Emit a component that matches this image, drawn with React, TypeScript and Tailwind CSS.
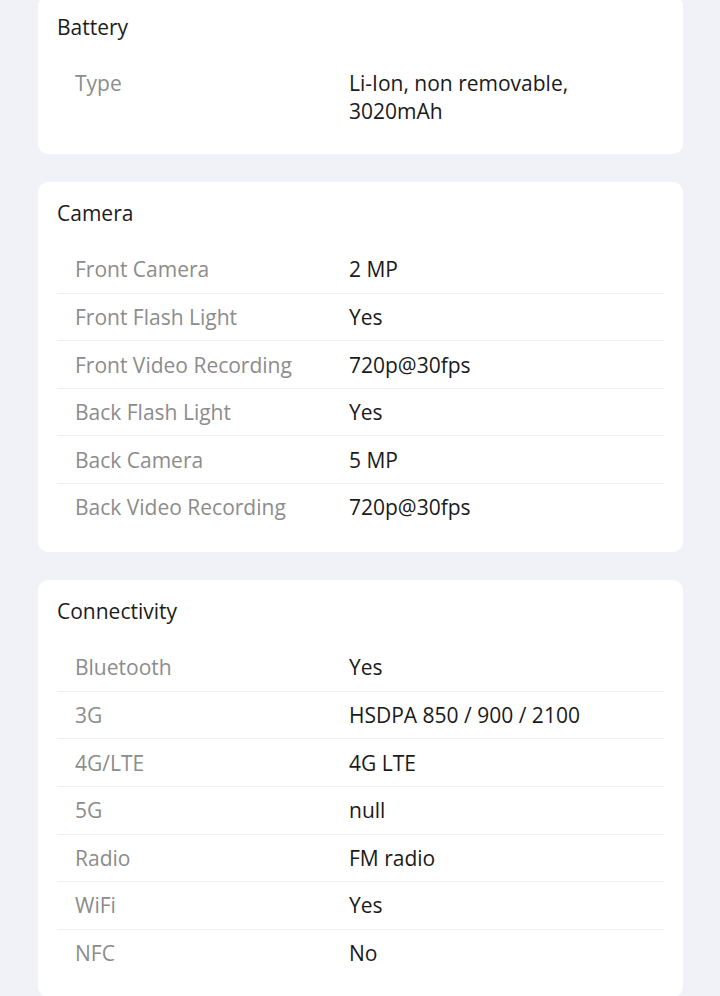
import React from "react";

type Row = { label: string; value: string };
type Section = { title: string; rows: Row[] };

const sections: Section[] = [
  { title: "Battery", rows: [{ label: "Type", value: "Li-Ion, non removable, 3020mAh" }] },
  {
    title: "Camera",
    rows: [
      { label: "Front Camera", value: "2 MP" },
      { label: "Front Flash Light", value: "Yes" },
      { label: "Front Video Recording", value: "720p@30fps" },
      { label: "Back Flash Light", value: "Yes" },
      { label: "Back Camera", value: "5 MP" },
      { label: "Back Video Recording", value: "720p@30fps" },
    ],
  },
  {
    title: "Connectivity",
    rows: [
      { label: "Bluetooth", value: "Yes" },
      { label: "3G", value: "HSDPA 850 / 900 / 2100" },
      { label: "4G/LTE", value: "4G LTE" },
      { label: "5G", value: "null" },
      { label: "Radio", value: "FM radio" },
      { label: "WiFi", value: "Yes" },
      { label: "NFC", value: "No" },
    ],
  },
];

export default function App() {
  return (
    <div
      className="min-h-[996px] w-[720px] bg-[#f0f2f7] overflow-hidden"
      style={{ fontFamily: '"Open Sans", "Noto Sans", sans-serif' }}
    >
      <div className="-mt-[4px] flex flex-col gap-[28.5px] pl-[38px]">
        {sections.map((s, si) => (
          <div
            key={s.title}
            className={`w-[645px] rounded-[10px] bg-white px-[19px] pt-[17px] ${si === 0 ? "pb-[19px]" : "pb-[21px]"}`}
          >
            <div className="h-[28px] text-[21px] leading-[28px] text-[#1c1c1c]">{s.title}</div>
            <div className="mt-[19px] flex flex-col">
              {s.rows.map((r, i) => (
                <div
                  key={r.label}
                  className={`grid grid-cols-[274px_1fr] px-[18px] py-[9.3px] text-[21px] leading-[28px] ${
                    i > 0 ? "border-t border-[#f0f0f2]" : ""
                  }`}
                >
                  <div className="text-[#8c8c8c]">{r.label}</div>
                  <div className="text-[#1a1a1a] max-w-[270px]">{r.value}</div>
                </div>
              ))}
            </div>
          </div>
        ))}
      </div>
    </div>
  );
}
